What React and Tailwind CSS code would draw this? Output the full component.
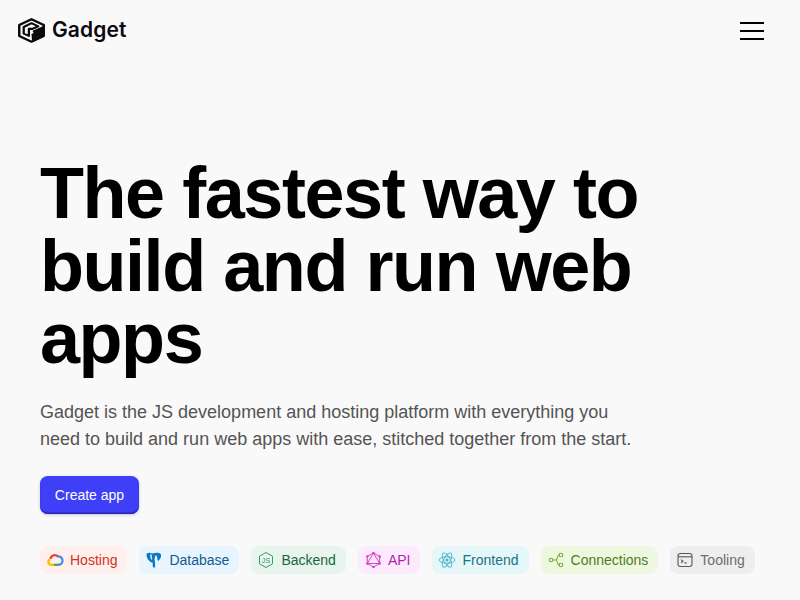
function GadgetLogo() {
  return (
    <svg width="27" height="25" viewBox="1 0.5 26 26.5" fill="none" preserveAspectRatio="none">
      <path d="M14 1.8 L25.8 8 V19.5 L14 25.6 L2.2 19.5 V8 Z" stroke="#0b0b0f" strokeWidth="2.4" strokeLinejoin="round" />
      <path d="M6.5 17 V10 L14 6 L20.5 9.3 L15 12 H11.5 V19.5 Z" stroke="#0b0b0f" strokeWidth="2.2" strokeLinejoin="round" />
      <path d="M15 14 L25.5 9 V19.5 L14.5 25 L14 17.5 L16 16.5 Z" fill="#0b0b0f" />
    </svg>
  );
}

function HamburgerIcon() {
  return (
    <svg width="24" height="18" viewBox="0 0 24 18" fill="#000">
      <rect x="0" y="0" width="24" height="2" />
      <rect x="0" y="8" width="24" height="2" />
      <rect x="0" y="16" width="24" height="2" />
    </svg>
  );
}

function CloudIcon() {
  return (
    <svg width="18" height="16" viewBox="0 0 18 16" fill="none" strokeWidth="2.2">
      <path d="M4.5 7 A4.2 4.2 0 0 1 12 4.8" stroke="#ea4335" />
      <path d="M11.6 4.4 A3.5 3.5 0 0 1 13 12.7" stroke="#4285f4" />
      <path d="M13.2 12.8 H8" stroke="#34a853" />
      <path d="M8 12.8 H5.5 A2.9 2.9 0 0 1 4.2 7.2" stroke="#fbbc05" />
    </svg>
  );
}

function PostgresIcon() {
  return (
    <svg width="18" height="18" viewBox="0 0 18 18" fill="#0a78c2">
      <path d="M1.5 4 C1.5 2 3.5 1.5 5.5 2 L7.5 2.5 C9.5 1.5 12 1.5 14 2 C16.5 2.5 16.5 5 15.5 7 L13.5 10 L12.5 9 L12 5.5 L10.5 4 L9.5 8 L10 11 L10.2 15.5 C10 17 8 17 7.8 15.5 L7.6 11.5 L5.5 11 L3 8.5 C2 7 1.5 5.5 1.5 4 Z" />
      <path d="M5 3.5 L6.6 3.5 L7.2 8.5 L6 8.5 Z" fill="#e8f5fe" />
    </svg>
  );
}

function NodeIcon() {
  return (
    <svg width="18" height="18" viewBox="0 0 18 18" fill="none" stroke="#2f9e6a" strokeWidth="1">
      <path d="M9 1.5 L15.5 5.2 V12.8 L9 16.5 L2.5 12.8 V5.2 Z" />
      <text x="9" y="11.8" textAnchor="middle" fontSize="7.5" stroke="none" fill="#2f9e6a" fontFamily="Liberation Sans, sans-serif">JS</text>
    </svg>
  );
}

function GraphqlIcon() {
  return (
    <svg width="18" height="18" viewBox="0 0 18 18" fill="none" stroke="#d63fd0" strokeWidth="1">
      <path d="M9.5 2 L15.7 5.5 V12.5 L9.5 16 L3.3 12.5 V5.5 Z" />
      <path d="M9.5 2 L15.7 12.5 H3.3 Z" />
      <g fill="#d63fd0" stroke="none">
        <circle cx="9.5" cy="2" r="1.3" />
        <circle cx="15.7" cy="5.5" r="1.3" />
        <circle cx="15.7" cy="12.5" r="1.3" />
        <circle cx="9.5" cy="16" r="1.3" />
        <circle cx="3.3" cy="12.5" r="1.3" />
        <circle cx="3.3" cy="5.5" r="1.3" />
      </g>
    </svg>
  );
}

function ReactIcon() {
  return (
    <svg width="18" height="18" viewBox="0 0 18 18" fill="none" stroke="#45b3c9" strokeWidth="0.9">
      <ellipse cx="9" cy="9" rx="8" ry="3.2" />
      <ellipse cx="9" cy="9" rx="8" ry="3.2" transform="rotate(60 9 9)" />
      <ellipse cx="9" cy="9" rx="8" ry="3.2" transform="rotate(120 9 9)" />
      <circle cx="9" cy="9" r="1.5" fill="#45b3c9" stroke="none" />
    </svg>
  );
}

function ConnectionsIcon() {
  return (
    <svg width="18" height="16" viewBox="0 0 18 16" fill="none" stroke="#7bab2c" strokeWidth="1.1">
      <circle cx="4" cy="8" r="1.8" />
      <circle cx="14" cy="3" r="1.8" />
      <circle cx="14" cy="13" r="1.8" />
      <path d="M5.8 8 H9 C10.5 8 10 3 12.2 3 M9 8 C10.5 8 10 13 12.2 13" />
    </svg>
  );
}

function TerminalIcon() {
  return (
    <svg width="18" height="16" viewBox="0 0 18 16" fill="none" stroke="#55585c" strokeWidth="1.1">
      <rect x="2" y="1.5" width="14" height="13" rx="2.5" />
      <path d="M2 4.8 H16" />
      <path d="M5 7.6 L7 9.2 L5 10.8 M8.2 11 H11" />
    </svg>
  );
}

const tags = [
  { label: 'Hosting', icon: CloudIcon, pill: 'bg-[#fff0ed]', text: 'text-[#d0341c]' },
  { label: 'Database', icon: PostgresIcon, pill: 'bg-[#e8f5fe]', text: 'text-[#10598f]' },
  { label: 'Backend', icon: NodeIcon, pill: 'bg-[#e8f5ee]', text: 'text-[#17663f]' },
  { label: 'API', icon: GraphqlIcon, pill: 'bg-[#fdeafc]', text: 'text-[#b21fb0]' },
  { label: 'Frontend', icon: ReactIcon, pill: 'bg-[#e6f7fa]', text: 'text-[#1a7286]' },
  { label: 'Connections', icon: ConnectionsIcon, pill: 'bg-[#eef8e1]', text: 'text-[#4a7f17]' },
  { label: 'Tooling', icon: TerminalIcon, pill: 'bg-[#eeeeee]', text: 'text-[#6b6e72]' },
];

export default function App() {
  return (
    <div className="w-[800px] h-[600px] overflow-hidden bg-[#f9f9f9] font-['Liberation_Sans',sans-serif]">
      {/* Nav */}
      <div className="flex items-center justify-between h-[62px] pl-[18px] pr-[36px]">
        <div className="flex items-center gap-[7px] mb-[2px]">
          <GadgetLogo />
          <span className="font-['Inter',sans-serif] text-[21px] font-semibold text-[#0b0b0f] tracking-[0.1px]">Gadget</span>
        </div>
        <HamburgerIcon />
      </div>

      {/* Hero */}
      <div className="px-[40px] pt-[95px]">
        <h1 className="w-[640px] text-[72px] leading-[72.5px] font-bold tracking-[-1.45px] text-black">
          The fastest way to build and run web apps
        </h1>
        <p className="mt-[24px] w-[600px] text-[18px] leading-[27px] text-[#545454]">
          Gadget is the JS development and hosting platform with everything you need to build and run web apps with ease, stitched together from the start.
        </p>
        <button className="mt-[23px] h-[38px] w-[99px] pt-[1px] rounded-[8px] bg-[#3f3ff8] text-white text-[14px] shadow-[inset_0_-1.5px_1px_#2626b0,0_1px_3px_rgba(40,40,160,0.25)]">
          Create app
        </button>
        <div className="mt-[32px] flex gap-[12px]">
          {tags.map(({ label, icon: Icon, pill, text }) => (
            <div key={label} className={`flex items-center gap-[6px] h-[28px] pl-[6px] pr-[10px] rounded-[8px] text-[14px] ${pill} ${text}`}>
              <Icon />
              <span className="pt-[1px]">{label}</span>
            </div>
          ))}
        </div>
      </div>
    </div>
  );
}
